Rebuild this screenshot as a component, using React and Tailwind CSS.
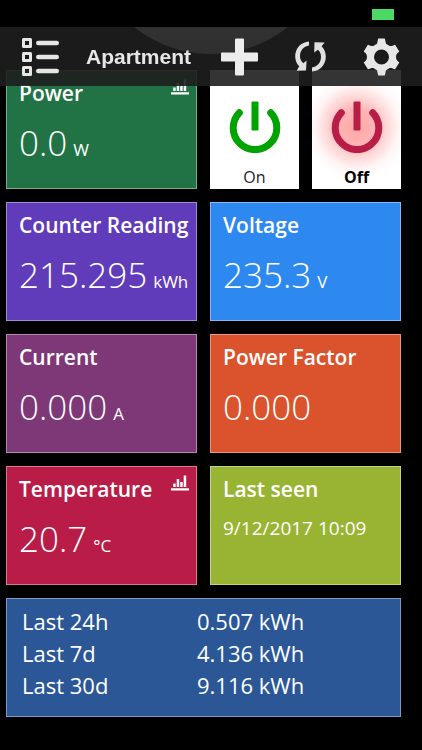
// src/App.jsx
import React, { useState } from "react";

function ListIcon() {
  return (
    <svg width="38" height="38" viewBox="0 0 38 38" fill="none" stroke="#e6e6e6">
      <g strokeWidth="3" strokeLinejoin="round">
        <rect x="1.5" y="1.5" width="7" height="7" />
        <rect x="1.5" y="15.5" width="7" height="7" />
        <rect x="1.5" y="29.5" width="7" height="7" />
      </g>
      <g strokeWidth="4.6" strokeLinecap="round">
        <path d="M16.3 5H34.7M16.3 19H34.7M16.3 33H34.7" />
      </g>
    </svg>
  );
}

function PlusIcon() {
  return (
    <svg width="37" height="38" viewBox="0 0 37 38" fill="#ececec">
      <path d="M15 0.5h7a1 1 0 0 1 1 1V14.5H36a1 1 0 0 1 1 1v7a1 1 0 0 1-1 1H23V36.500a1 1 0 0 1-1 1h-7a1 1 0 0 1-1-1V23.500H1a1 1 0 0 1-1-1v-7a1 1 0 0 1 1-1H14V1.500a1 1 0 0 1 1-1z" />
    </svg>
  );
}

function SyncIcon() {
  return (
    <svg width="31" height="31" viewBox="0 0 31 31" fill="#e0e0e0">
      <path d="M14 0.500C6 1 0.200 7.300 0.200 15.300c0 4.200 1.400 7.300 4 10L1.700 29.800l9.300-.2.600-10-3.300 2.700C6.300 20.400 5 18.200 5 15.300 5 9.500 8.600 5.600 14 4.600z" />
      <path d="M17 30.500c8-.5 13.800-6.800 13.800-14.800 0-4.200-1.400-7.600-4.200-10.400L29.700 1.400 19.500 1.200 19.200 11.600l3.800-2.800c2 2 3 4.200 3 6.900 0 5.800-3.600 9.700-9 10.700z" />
    </svg>
  );
}

function GearIcon() {
  return (
    <svg width="37" height="38" viewBox="0 0 37 38" fill="#e6e6e6" fillRule="evenodd">
      <path d="M15.200 0.500h6.600l1.200 5.200 3.700 2.200c1.200.6 3.200-.3 5.400-1.200l4.200 6.800c-1.500 1.400-3.300 2.300-3.300 5.500s1.800 4.100 3.300 5.500l-4.200 6.800c-2.200-.9-4.200-1.800-5.400-1.200L23 32.300l-1.200 5.200h-6.600L14 32.300l-3.700-2.200c-1.200-.6-3.200.3-5.400 1.200L.700 24.500C2.200 23.100 4 22.200 4 19s-1.800-4.100-3.300-5.500l4.200-6.800c2.200.9 4.200 1.800 5.400 1.200L14 5.700zM18.500 11.500a7.500 7.500 0 1 0 0 15 7.500 7.500 0 0 0 0-15z" />
    </svg>
  );
}

function ChartIcon() {
  return (
    <svg className="shrink-0" width="18" height="16" viewBox="0 0 18 16" fill="currentColor">
      <path d="M0 13.200h18v2.300H0zM2.200 8.500h2.500V12H2.200zM5.700 4h2.500v8H5.700zM9.200 7h2.500v5H9.200zM12.700 0.500h2.500V12h-2.500z" />
    </svg>
  );
}

function PowerIcon() {
  return (
    <svg width="52" height="52" viewBox="0 0 52 52" fill="none" stroke="currentColor" strokeWidth="7">
      <path strokeLinecap="round" d="M10.300 11.700A21.800 21.800 0 1 0 41.700 11.700" />
      <rect x="22.500" y="0.500" width="7" height="29" rx="1" fill="currentColor" stroke="none" />
    </svg>
  );
}

function Tile({ title, color, chart, children }) {
  return (
    <section className={`h-[119px] border border-white/40 pt-2 pl-3 pr-[7px] text-white ${color}`}>
      <div className="flex items-start justify-between">
        <h2 className="whitespace-nowrap text-[21px] leading-7 font-semibold">{title}</h2>
        {chart && <ChartIcon />}
      </div>
      <div className="mt-[11px]">{children}</div>
    </section>
  );
}

function Reading({ value, unit }) {
  return (
    <p className="whitespace-nowrap text-[35px] leading-[50px] font-light">
      {value}
      {unit && <span className="ml-[6px] text-[17px] font-normal">{unit}</span>}
    </p>
  );
}

const usage = [
  { label: "Last 24h", value: "0.507 kWh" },
  { label: "Last 7d", value: "4.136 kWh" },
  { label: "Last 30d", value: "9.116 kWh" },
];

function App() {
  const [on, setOn] = useState(false);

  return (
    <div className="min-h-screen bg-black font-['Open_Sans','Noto_Sans',sans-serif]">
      {/* Status bar and toolbar stay above the scrolled tiles */}
      <header className="fixed inset-x-0 top-0 z-10">
        <div className="flex h-[27px] items-start justify-end bg-black pt-[9px] pr-7">
          <div className="h-[11px] w-[22px] bg-[#4cd964]" />
        </div>
        <div className="relative flex h-[59px] items-center justify-between overflow-hidden bg-[#1e1e1e]/90 px-[22px]">
          <div className="flex items-center gap-[26px]">
            <button type="button" aria-label="Menu"><ListIcon /></button>
            <h1 className="font-['Liberation_Sans',sans-serif] text-[21px] font-bold text-[#e6e6e6]">Apartment</h1>
          </div>
          <div className="flex items-center gap-[37px]">
            <button type="button" aria-label="Add"><PlusIcon /></button>
            <button type="button" aria-label="Refresh"><SyncIcon /></button>
            <button type="button" aria-label="Settings"><GearIcon /></button>
          </div>
          {/* glare */}
          <div className="pointer-events-none absolute bottom-8 left-1/2 size-[246px] -translate-x-1/2 rounded-full bg-linear-to-b from-white/16 to-white/9" />
        </div>
      </header>

      <main className="grid grid-cols-2 gap-[13px] pt-[70px] pr-[21px] pb-8 pl-[6px]">
        <Tile title="Power" color="bg-[#217346]" chart>
          <Reading value="0.0" unit="W" />
        </Tile>

        <div className="grid grid-cols-2 gap-[13px]">
          <button
            type="button"
            aria-pressed={on}
            onClick={() => setOn(true)}
            className="flex flex-col items-center justify-end bg-white text-[#222]"
          >
            <span className="text-[#00a300]"><PowerIcon /></span>
            <span className="mt-3 text-base">On</span>
          </button>
          <button
            type="button"
            aria-pressed={!on}
            onClick={() => setOn(false)}
            className="flex flex-col items-center justify-end bg-white bg-[radial-gradient(circle_at_50%_48%,#ffa6a6_0px,#ffb4b4_18px,#ffdcdc_32px,#fff5f5_42px,#ffffff_52px)] text-black"
          >
            <span className="text-[#b91d47]"><PowerIcon /></span>
            <span className="mt-3 text-base font-bold">Off</span>
          </button>
        </div>

        <Tile title="Counter Reading" color="bg-[#603cba]">
          <Reading value="215.295" unit="kWh" />
        </Tile>
        <Tile title="Voltage" color="bg-[#2d89ef]">
          <Reading value="235.3" unit="V" />
        </Tile>
        <Tile title="Current" color="bg-[#7e3878]">
          <Reading value="0.000" unit="A" />
        </Tile>
        <Tile title="Power Factor" color="bg-[#da532c]">
          <Reading value="0.000" />
        </Tile>
        <Tile title="Temperature" color="bg-[#b91d47]" chart>
          <Reading value="20.7" unit="°C" />
        </Tile>
        <Tile title="Last seen" color="bg-[#99b433]">
          <p className="text-[19px] leading-7">9/12/2017 10:09</p>
        </Tile>

        <section className="col-span-2 h-[119px] border border-white/40 bg-[#2b5797] pt-[6px] pl-[15px] text-white">
          <table className="w-full text-left text-[22px] leading-8">
            <tbody>
              {usage.map((row) => (
                <tr key={row.label}>
                  <th scope="row" className="w-[175px] p-0 font-normal">{row.label}</th>
                  <td className="p-0">{row.value}</td>
                </tr>
              ))}
            </tbody>
          </table>
        </section>
      </main>
    </div>
  );
}

export default App;
